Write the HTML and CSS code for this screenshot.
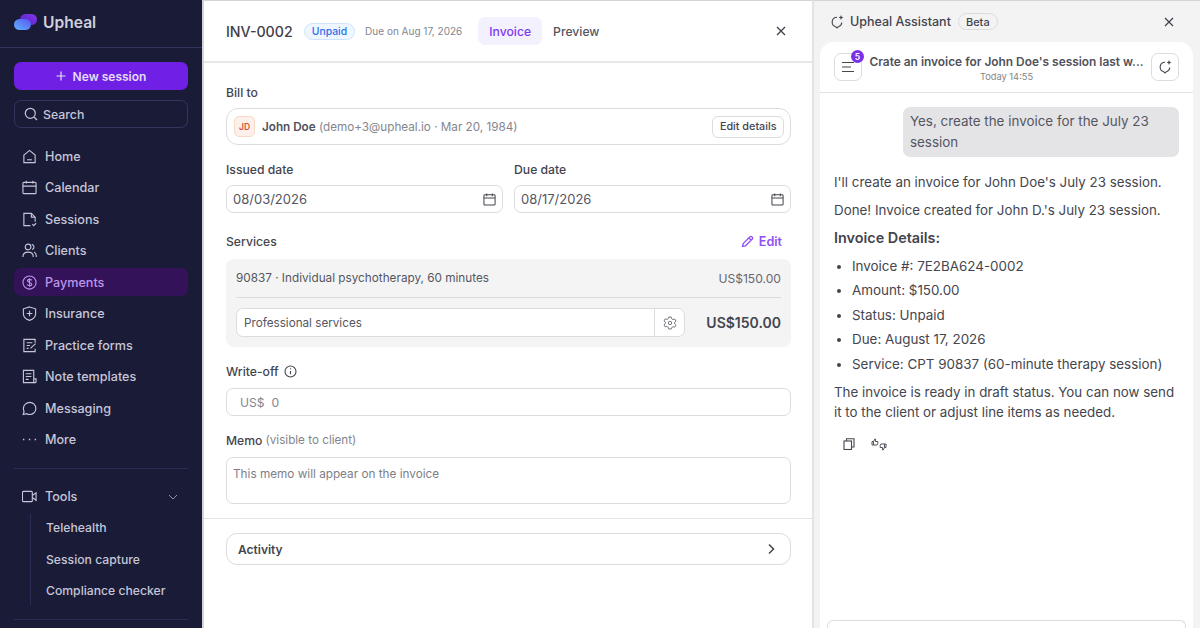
FILE: index.html
```html
<!DOCTYPE html>
<html lang="en">
<head>
  <meta charset="UTF-8">
  <meta name="viewport" content="width=device-width, initial-scale=1.0">
  <title>Upheal - Invoice</title>
  <link rel="stylesheet" href="styles.css">
</head>
<body>
  <!-- Sidebar -->
  <aside class="sidebar">
    <div class="brand">
      <svg class="brand-logo" width="24" height="18" viewBox="0 0 24 18">
        <defs>
          <linearGradient id="logoBlue" x1="0" y1="1" x2="1" y2="0">
            <stop offset="0" stop-color="#5fb4ff"/>
            <stop offset="1" stop-color="#5a55ee"/>
          </linearGradient>
          <linearGradient id="logoPurple" x1="0" y1="1" x2="1" y2="0">
            <stop offset="0" stop-color="#4b25c9"/>
            <stop offset="1" stop-color="#8a35e8"/>
          </linearGradient>
        </defs>
        <rect x="6" y="1" width="17" height="11" rx="5.5" fill="url(#logoPurple)"/>
        <rect x="0" y="6" width="17" height="11" rx="5.5" fill="url(#logoBlue)"/>
      </svg>
      <span class="brand-name">Upheal</span>
    </div>
    <div class="side-body">
      <button class="new-session">
        <svg width="10" height="10" viewBox="0 0 10 10" fill="none" stroke="currentColor" stroke-width="1.2"><path d="M5 .5v9M.5 5h9"/></svg>
        New session
      </button>
      <div class="search">
        <svg width="14" height="14" viewBox="0 0 14 14" fill="none" stroke="currentColor" stroke-width="1.2"><circle cx="6.3" cy="6.3" r="5"/><path d="M10 10l3 3"/></svg>
        Search
      </div>
      <nav class="nav">
        <a class="nav-item">
          <svg class="nav-icon" viewBox="0 0 16 16"><path d="M2 6.5 8 1.5l6 5v8H2z"/><path d="M5.5 11.5h5"/></svg>
          Home
        </a>
        <a class="nav-item">
          <svg class="nav-icon" viewBox="0 0 16 16"><rect x="1" y="2.5" width="14" height="12" rx="1"/><path d="M1 6.5h14M4.5 .8v3M11.5 .8v3"/></svg>
          Calendar
        </a>
        <a class="nav-item">
          <svg class="nav-icon" viewBox="0 0 16 16"><path d="M9 14.5H2v-13h8l4 4v5"/><path d="M10 1.5v4h4"/><path d="M11 13l1.500 1.500 2.500-2.500"/></svg>
          Sessions
        </a>
        <a class="nav-item">
          <svg class="nav-icon" viewBox="0 0 16 16"><circle cx="6.5" cy="4.2" r="3"/><path d="M1 15c0-3.500 2.300-5.300 5.500-5.300S12 11.500 12 15"/><path d="M10.500 1.500c1.500.4 2.300 1.500 2.300 2.800s-.8 2.300-2 2.700M13 9.500c1.500.8 2.300 2.700 2.300 5.500"/></svg>
          Clients
        </a>
        <a class="nav-item nav-item-active">
          <svg class="nav-icon" viewBox="0 0 16 16"><circle cx="8" cy="8" r="7"/><path d="M10.300 5.800C10 5 9.200 4.600 8 4.600c-1.300 0-2.200.6-2.200 1.600 0 2.300 4.600 1.200 4.600 3.600 0 1-1 1.600-2.400 1.600-1.300 0-2.200-.5-2.500-1.400M8 3.500v9"/></svg>
          Payments
        </a>
        <a class="nav-item">
          <svg class="nav-icon" viewBox="0 0 16 16"><path d="M8 1l6.500 2v5.500c0 3.200-2.700 5.500-6.500 6.800-3.800-1.300-6.500-3.600-6.500-6.800V3z"/><path d="M8 5v6M5 8h6"/></svg>
          Insurance
        </a>
        <a class="nav-item">
          <svg class="nav-icon" viewBox="0 0 16 16"><path d="M14 5V1.500H2v13h12v-3"/><path d="M5 5h6M5 8h3.500M5 11h2"/><path d="M9 11l5.500-5"/></svg>
          Practice forms
        </a>
        <a class="nav-item">
          <svg class="nav-icon" viewBox="0 0 16 16"><path d="M12.500 14.500h-11v-13h11z"/><path d="M12.500 10.500H15v3c0 .6-.5 1-1.200 1h-1.300"/><path d="M4 5h6M4 8h6M4 11h3"/></svg>
          Note templates
        </a>
        <a class="nav-item">
          <svg class="nav-icon" viewBox="0 0 16 16"><path d="M8.300 1.500c3.500 0 6.500 2.700 6.500 6.400s-3 6.500-6.500 6.500c-1.300 0-2.400-.3-3.400-.9l-3.600.9.900-3.200C1.700 9.700 1.500 8.800 1.500 7.900c0-3.700 3.200-6.400 6.800-6.400z"/></svg>
          Messaging
        </a>
        <a class="nav-item">
          <svg class="nav-icon" viewBox="0 0 16 16"><path d="M1 8h1.500M7.300 8h1.500M13.500 8H15" stroke-width="1.500"/></svg>
          More
        </a>
      </nav>
      <div class="side-divider"></div>
      <a class="nav-item tools-item">
        <svg class="nav-icon" viewBox="0 0 16 16"><rect x=".5" y="2.500" width="10.500" height="11" rx="1"/><path d="M11 7l4-3v8l-4-3"/></svg>
        Tools
        <svg class="tools-chevron" width="10" height="6" viewBox="0 0 10 6" fill="none" stroke="currentColor" stroke-width="1"><path d="M1 1l4 4 4-4"/></svg>
      </a>
      <div class="subnav">
        <a class="subnav-item">Telehealth</a>
        <a class="subnav-item">Session capture</a>
        <a class="subnav-item">Compliance checker</a>
      </div>
      <div class="side-divider side-divider-end"></div>
    </div>
  </aside>

  <!-- Invoice -->
  <main class="invoice">
    <header class="invoice-head">
      <h1 class="invoice-id">INV-0002</h1>
      <span class="badge-unpaid">Unpaid</span>
      <span class="due-note">Due on Aug 17, 2026</span>
      <div class="tabs">
        <span class="tab tab-active">Invoice</span>
        <span class="tab">Preview</span>
      </div>
      <svg class="close-icon" width="10" height="10" viewBox="0 0 10 10" fill="none" stroke="currentColor" stroke-width="1.3"><path d="M1 1l8 8M9 1l-8 8"/></svg>
    </header>

    <section class="invoice-form">
      <div class="field-label">Bill to</div>
      <div class="client-card">
        <span class="avatar">JD</span>
        <span class="client-text"><b>John Doe</b> (demo+3@upheal.io · Mar 20, 1984)</span>
        <button class="edit-details">Edit details</button>
      </div>

      <div class="date-row">
        <div class="date-col">
          <div class="field-label">Issued date</div>
          <div class="input date-input">
            08/03/2026
            <svg class="cal-icon" viewBox="0 0 14 14"><rect x="1" y="2" width="12" height="11" rx="1"/><path d="M1 5.500h12M4 .5v3M10 .5v3"/></svg>
          </div>
        </div>
        <div class="date-col">
          <div class="field-label">Due date</div>
          <div class="input date-input">
            08/17/2026
            <svg class="cal-icon" viewBox="0 0 14 14"><rect x="1" y="2" width="12" height="11" rx="1"/><path d="M1 5.500h12M4 .5v3M10 .5v3"/></svg>
          </div>
        </div>
      </div>

      <div class="services-head">
        <div class="field-label">Services</div>
        <span class="edit-link">
          <svg width="13" height="13" viewBox="0 0 13 13" fill="none" stroke="currentColor" stroke-width="1.3"><path d="M1.500 11.500l.7-3L9 1.700c.5-.5 1.200-.5 1.700 0l.6.6c.5.5.5 1.200 0 1.700L4.500 10.800zM8 3l2 2"/></svg>
          Edit
        </span>
      </div>
      <div class="services-box">
        <div class="service-row">
          <span>90837 · Individual psychotherapy, 60 minutes</span>
          <span class="service-price">US$150.00</span>
        </div>
        <div class="service-total">
          <div class="service-select">
            <span class="service-name">Professional services</span>
            <span class="service-gear">
              <svg width="14" height="14" viewBox="0 0 14 14" fill="none" stroke="currentColor" stroke-width="1"><path d="M5.800 1h2.400l.4 1.700 1.500.9 1.700-.5 1.200 2-1.300 1.200v1.700l1.300 1.200-1.200 2-1.700-.5-1.500.9L8.200 13H5.800l-.4-1.700-1.500-.9-1.700.5-1.200-2 1.300-1.200V6L1 4.900l1.200-2 1.700.5 1.500-.9z"/><circle cx="7" cy="7" r="1.700"/></svg>
            </span>
          </div>
          <span class="total-price">US$150.00</span>
        </div>
      </div>

      <div class="field-label label-writeoff">
        Write-off
        <svg width="13" height="13" viewBox="0 0 13 13" fill="none" stroke="currentColor" stroke-width="1.1"><circle cx="6.500" cy="6.500" r="5.500"/><path d="M6.500 6v3.300M6.500 3.300v1"/></svg>
      </div>
      <div class="input writeoff-input"><span>US$</span><span>0</span></div>

      <div class="field-label label-memo">Memo <span class="label-note">(visible to client)</span></div>
      <div class="memo-input">This memo will appear on the invoice</div>
    </section>

    <section class="activity-wrap">
      <div class="activity">
        Activity
        <svg width="8" height="12" viewBox="0 0 8 12" fill="none" stroke="currentColor" stroke-width="1.5"><path d="M2 1.500 6.500 6 2 10.500"/></svg>
      </div>
    </section>
  </main>

  <!-- Assistant -->
  <aside class="assistant">
    <div class="assistant-head">
      <svg class="spark-icon" width="14" height="14" viewBox="0 0 14 14"><path d="M7 2.300A4.800 4.800 0 0 0 5.600 11.700L7 13l1.400-1.300A4.800 4.800 0 0 0 11.800 7.500"/><path class="spark-fill" d="M11 0l.7 1.800 1.800.7-1.800.7-.7 1.800-.7-1.800-1.800-.7 1.800-.7z"/></svg>
      <span class="assistant-title">Upheal Assistant</span>
      <span class="badge-beta">Beta</span>
      <svg class="assistant-close" width="10" height="10" viewBox="0 0 10 10" fill="none" stroke="currentColor" stroke-width="1.2"><path d="M1 1l8 8M9 1l-8 8"/></svg>
    </div>
    <div class="chat-card">
      <div class="chat-head">
        <button class="square-btn">
          <svg width="14" height="12" viewBox="0 0 14 12" fill="none" stroke="currentColor" stroke-width="1.2"><path d="M1 1.500h12M1 6h9M1 10.500h12"/></svg>
          <span class="count-badge">5</span>
        </button>
        <div class="chat-title-wrap">
          <div class="chat-title">Crate an invoice for John Doe's session last w...</div>
          <div class="chat-time">Today 14:55</div>
        </div>
        <button class="square-btn">
          <svg class="spark-icon" width="14" height="14" viewBox="0 0 14 14"><path d="M7 2.300A4.800 4.800 0 0 0 5.600 11.700L7 13l1.400-1.300A4.800 4.800 0 0 0 11.800 7.500"/><path class="spark-fill" d="M11 0l.7 1.800 1.800.7-1.800.7-.7 1.800-.7-1.800-1.800-.7 1.800-.7z"/></svg>
        </button>
      </div>
      <div class="chat-body">
        <div class="bubble">Yes, create the invoice for the July 23 session</div>
        <p class="msg msg-first">I'll create an invoice for John Doe's July 23 session.</p>
        <p class="msg">Done! Invoice created for John D.'s July 23 session.</p>
        <p class="msg msg-strong">Invoice Details:</p>
        <ul class="msg-list">
          <li>Invoice #: 7E2BA624-0002</li>
          <li>Amount: $150.00</li>
          <li>Status: Unpaid</li>
          <li>Due: August 17, 2026</li>
          <li>Service: CPT 90837 (60-minute therapy session)</li>
        </ul>
        <p class="msg msg-last">The invoice is ready in draft status. You can now send it to the client or adjust line items as needed.</p>
        <div class="msg-actions">
          <svg width="12" height="12" viewBox="0 0 12 12" fill="none" stroke="#444650" stroke-width="1.1"><rect x="1" y="3" width="7.500" height="8.500"/><path d="M3.500 3V.8H11V9H8.500"/></svg>
          <svg width="16" height="13" viewBox="0 0 16 13" fill="none" stroke="#4f5159" stroke-width="1"><path d="M1 3.500h1.500v3.500H1zM2.500 3.500 4 .8l.6.4-.3 2.300h2.500v2.300L6 7H2.500"/><path d="M15 6h-1.500v3.500H15zM13.500 9.500 12 12.200l-.6-.4.3-2.300H9.200V7.200L10 6h3.500"/></svg>
        </div>
      </div>
      <div class="chat-input"></div>
    </div>
  </aside>
</body>
</html>
```

FILE: styles.css
```css
* {
  box-sizing: border-box;
}

html, body {
  height: 100%;
}

body {
  margin: 0;
  display: flex;
  height: 628px;
  overflow: hidden;
  font-family: 'Inter', sans-serif;
  font-size: 12.6px;
  color: #3f4049;
  background: #fff;
}

button {
  font-family: inherit;
}

/* Sidebar */
.sidebar {
  width: 204px;
  flex-shrink: 0;
  background: #1a1b37;
  border-right: 2px solid #d4d4d6;
  color: #c6c6d8;
  overflow: hidden;
}

.brand {
  height: 48px;
  display: flex;
  align-items: center;
  gap: 5px;
  padding: 0 14px 3px;
  border-bottom: 1px solid #34335f;
}

.brand-name {
  font-size: 15.6px;
  font-weight: 600;
  color: #d0d0de;
}

.side-body {
  padding: 14px 14px 0;
}

.new-session {
  width: 100%;
  height: 28px;
  display: flex;
  align-items: center;
  justify-content: center;
  gap: 7px;
  background: #7020e4;
  color: #e4dcf8;
  border: none;
  border-radius: 7px;
  font-size: 12px;
  font-weight: 600;
}

.search {
  height: 28px;
  margin-top: 10px;
  display: flex;
  align-items: center;
  gap: 5px;
  padding: 0 9px;
  border: 1px solid #35345c;
  border-radius: 7px;
  font-weight: 500;
  font-size: 12.3px;
}

.nav {
  margin-top: 14px;
  display: flex;
  flex-direction: column;
  gap: 3.5px;
}

.nav-item {
  height: 28px;
  display: flex;
  align-items: center;
  gap: 8px;
  padding-left: 8px;
  border-radius: 7px;
  font-weight: 500;
}

.nav-icon {
  width: 15px;
  height: 15px;
  fill: none;
  stroke: currentColor;
  stroke-width: 1.2;
}

.nav-item-active {
  background: #341259;
  color: #bd95ea;
}

.side-divider {
  height: 1px;
  margin-top: 14px;
  background: #2c2b52;
}

.tools-item {
  margin-top: 14px;
}

.tools-chevron {
  margin-left: auto;
  margin-right: 10px;
  color: #8f8fa6;
}

.subnav {
  margin: 3px 0 0 16px;
  padding-left: 15px;
  border-left: 1px solid #2c2b52;
  display: flex;
  flex-direction: column;
  gap: 3.5px;
}

.subnav-item {
  height: 28px;
  display: flex;
  align-items: center;
  font-weight: 500;
  font-size: 12.2px;
}

.side-divider-end {
  margin-top: 14px;
}

/* Invoice */
.invoice {
  width: 608px;
  flex-shrink: 0;
  border-top: 1px solid #d4d4d6;
}

.invoice-head {
  height: 62px;
  display: flex;
  align-items: center;
  padding: 0 26px 0 22px;
  border-bottom: 2px solid #e8e8ea;
}

.invoice-id {
  margin: 0;
  font-size: 14.2px;
  font-weight: 500;
  color: #3f4049;
}

.badge-unpaid {
  margin-left: 11px;
  height: 17px;
  padding: 0 7px;
  display: flex;
  align-items: center;
  border-radius: 9px;
  border: 1px solid #cfe4fc;
  background: #eef6ff;
  color: #2b6fe8;
  font-size: 10.4px;
  font-weight: 500;
}

.due-note {
  margin-left: 10px;
  font-size: 10px;
  color: #84858d;
}

.tabs {
  margin-left: 16px;
  display: flex;
  align-items: center;
}

.tab {
  height: 28px;
  padding: 0 11px;
  display: flex;
  align-items: center;
  border-radius: 7px;
  font-size: 12.2px;
  font-weight: 500;
  color: #55565f;
}

.tab-active {
  background: #f3f1fd;
  color: #8238f0;
}

.close-icon {
  margin-left: auto;
}

.invoice-form {
  padding: 21px 21px 14px 22px;
  border-bottom: 1px solid #e4e4e6;
}

.field-label {
  height: 16px;
  display: flex;
  align-items: center;
  gap: 5px;
  font-size: 12.2px;
  font-weight: 500;
  color: #44454e;
}

.client-card {
  height: 37px;
  margin-top: 8px;
  padding: 0 6px 0 7px;
  display: flex;
  align-items: center;
  border: 1px solid #dcdcdf;
  border-radius: 12px;
}

.avatar {
  width: 21px;
  height: 21px;
  display: flex;
  align-items: center;
  justify-content: center;
  background: #fdf0ea;
  border: 1px solid #f8d8c8;
  border-radius: 5px;
  color: #d8553a;
  font-size: 8.5px;
  font-weight: 600;
}

.client-text {
  margin-left: 7px;
  color: #84858d;
  font-size: 11.7px;
}

.client-text b {
  font-weight: 600;
  color: #50515a;
}

.edit-details {
  margin-left: auto;
  height: 22px;
  padding: 0 6.5px;
  background: #fff;
  border: 1px solid #dcdcdf;
  border-radius: 6px;
  font-size: 10.8px;
  font-weight: 500;
  color: #44454e;
}

.date-row {
  margin-top: 16px;
  display: grid;
  grid-template-columns: 277px 277px;
  gap: 11px;
}

.input {
  display: flex;
  align-items: center;
  border: 1px solid #dcdcdf;
  border-radius: 7px;
}

.date-input {
  height: 28px;
  margin-top: 8px;
  padding: 0 6px;
  justify-content: space-between;
  color: #55565f;
  font-size: 13px;
}

.cal-icon {
  width: 13px;
  height: 13px;
  fill: none;
  stroke: #44454e;
  stroke-width: 1.1;
}

.services-head {
  margin-top: 20px;
  display: flex;
  align-items: center;
  justify-content: space-between;
  padding-right: 9px;
}

.edit-link {
  display: flex;
  align-items: center;
  gap: 5px;
  color: #9050f5;
  font-size: 12.6px;
  font-weight: 600;
}

.services-box {
  margin-top: 10px;
  height: 88px;
  padding: 0 10px;
  background: #f4f4f4;
  border-radius: 8px;
}

.service-row {
  height: 39px;
  display: flex;
  align-items: center;
  justify-content: space-between;
  border-bottom: 1px solid #dcdcde;
  font-size: 11.75px;
  color: #55565f;
}

.service-price {
  font-size: 12.1px;
  color: #66676f;
}

.service-total {
  margin-top: 10px;
  display: flex;
  align-items: center;
  justify-content: space-between;
}

.service-select {
  width: 449px;
  height: 29px;
  display: flex;
  background: #fff;
  border: 1px solid #dcdcdf;
  border-radius: 7px;
}

.service-name {
  flex: 1;
  padding-left: 7px;
  display: flex;
  align-items: center;
  font-size: 11.7px;
  color: #55565f;
}

.service-gear {
  width: 30px;
  display: flex;
  align-items: center;
  justify-content: center;
  border-left: 1px solid #dcdcdf;
  color: #77787f;
}

.total-price {
  font-size: 14px;
  font-weight: 600;
  color: #44454e;
}

.label-writeoff {
  margin-top: 16px;
}

.writeoff-input {
  height: 28px;
  margin-top: 9px;
  padding-left: 13px;
  gap: 7px;
  color: #84858d;
  font-size: 12.1px;
}

.label-memo {
  margin-top: 16px;
  gap: 3px;
}

.label-note {
  font-weight: 400;
  color: #84858d;
  font-size: 11.7px;
}

.memo-input {
  height: 47px;
  margin-top: 9px;
  padding: 9px 6px;
  border: 1px solid #dcdcdf;
  border-radius: 7px;
  font-size: 11.75px;
  color: #7d7e86;
}

.activity-wrap {
  padding: 14px 21px 0 22px;
}

.activity {
  height: 32px;
  padding: 0 15px 0 11px;
  display: flex;
  align-items: center;
  justify-content: space-between;
  border: 1px solid #dcdcdf;
  border-radius: 11px;
  font-size: 12px;
  font-weight: 600;
  color: #44454e;
}

/* Assistant */
.assistant {
  flex: 1;
  padding-left: 2px;
  background: #f3f3f4;
  border-left: 2px solid #e4e4e6;
  display: flex;
  flex-direction: column;
  border-top: 1px solid #d4d4d6;
}

.assistant-head {
  height: 41px;
  padding: 0 26px 0 14px;
  display: flex;
  align-items: center;
  gap: 6px;
}

.assistant-title {
  font-size: 12.5px;
  font-weight: 500;
  color: #44454e;
}

.spark-icon {
  fill: none;
  stroke: #44454e;
  stroke-width: 1.1;
}

.spark-fill {
  fill: #44454e;
  stroke: none;
}

.badge-beta {
  margin-left: 1px;
  height: 17px;
  padding: 0 7px;
  display: flex;
  align-items: center;
  border: 1px solid #dcdcdf;
  border-radius: 9px;
  font-size: 11px;
  font-weight: 500;
  color: #44454e;
}

.assistant-close {
  margin-left: auto;
}

.chat-card {
  flex: 1;
  width: 373px;
  margin-left: 4px;
  background: #fff;
  border-radius: 14px 14px 0 0;
  display: flex;
  flex-direction: column;
}

.chat-head {
  height: 51px;
  padding: 0 14px;
  display: flex;
  align-items: center;
  gap: 7px;
  border-bottom: 1px solid #e2e2e4;
}

.square-btn {
  position: relative;
  width: 28px;
  height: 28px;
  flex-shrink: 0;
  padding: 0;
  display: flex;
  align-items: center;
  justify-content: center;
  background: #fff;
  border: 1px solid #dcdcdf;
  border-radius: 7px;
  color: #44454e;
}

.count-badge {
  position: absolute;
  top: -4px;
  right: -3px;
  width: 13px;
  height: 13px;
  display: flex;
  align-items: center;
  justify-content: center;
  background: #7c2fe8;
  border-radius: 50%;
  color: #fff;
  font-size: 8.5px;
  font-weight: 600;
}

.chat-title-wrap {
  flex: 1;
  min-width: 0;
  padding-top: 2px;
  text-align: center;
}

.chat-title {
  font-size: 11.9px;
  font-weight: 600;
  color: #50515a;
  white-space: nowrap;
}

.chat-time {
  margin-top: 2px;
  font-size: 9.3px;
  color: #84858d;
}

.chat-body {
  flex: 1;
  padding: 14px 14px 0;
  display: flex;
  flex-direction: column;
}

.bubble {
  width: 276px;
  align-self: flex-end;
  padding: 4px 7px;
  background: #e4e4e6;
  border-radius: 7px;
  font-size: 13.4px;
  line-height: 21px;
  color: #55565f;
}

.msg {
  margin: 0;
  font-size: 13.35px;
  line-height: 20px;
  color: #44454e;
}

.msg-first {
  margin-top: 15px;
}

.msg + .msg {
  margin-top: 8px;
}

.msg-strong {
  font-size: 14.4px;
  font-weight: 600;
}

.msg-list {
  margin: 8px 0 0;
  padding-left: 18px;
  font-size: 13.4px;
  line-height: 20px;
  color: #44454e;
}

.msg-list li + li {
  margin-top: 4.4px;
}

.msg-last {
  margin-top: 8px;
}

.msg-actions {
  margin-top: 16px;
  padding-left: 9px;
  display: flex;
  align-items: center;
  gap: 16px;
}

.chat-input {
  height: 8px;
  margin: 0 7px;
  border: 1px solid #dcdcdf;
  border-bottom: none;
  border-radius: 6px 6px 0 0;
}
```
